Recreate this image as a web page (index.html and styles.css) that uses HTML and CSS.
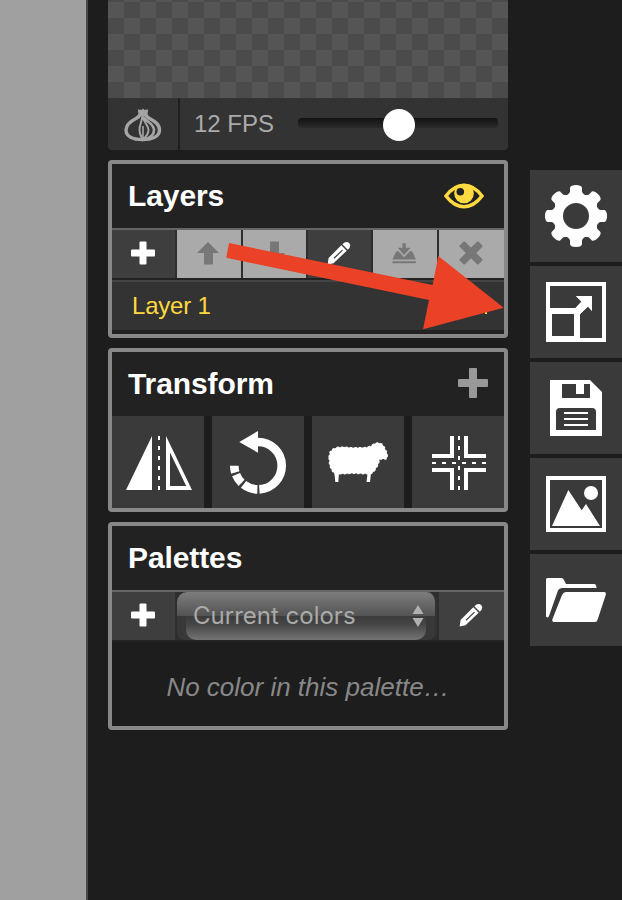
FILE: index.html
```html
<!DOCTYPE html>
<html lang="en">
<head>
<meta charset="utf-8">
<title>Sprite editor</title>
<link rel="stylesheet" href="styles.css">
</head>
<body>
<main class="app">
  <div class="canvas-area"></div>
  <div class="panels">
    <section class="preview">
      <div class="preview-frame"></div>
      <div class="preview-controls">
        <div class="onion">
          <svg width="40" height="38" viewBox="123 107 40 38" fill="none" stroke="#a5a5a5">
            <path d="M139.500 110C141 115 139.500 116.500 136 118.500C131 121 126 124 126 130C126 136.500 133 139.500 142.500 139.500S159.500 136.500 159.500 130C159.500 124 154 121 149.500 118.500C146 116.500 145 115 146.500 110" stroke-width="3.400"/>
            <path d="M138 109l3 1.500 2-2 2 2 3-1.500-2 7h-6z" fill="#a5a5a5" stroke="none"/>
            <path d="M143.300 117C146 121.500 154 123.500 154 130C154 135.500 149 138.500 143.500 139.500" stroke-width="2.600"/>
            <path d="M142.500 115C142 122 139.500 124 139.500 130C139.500 134 141.500 137 142.700 140C145 137.500 148.500 134.500 148.500 130C148.500 125 143.500 122.500 142.500 115z" stroke-width="2"/>
            <path d="M143 126v14" stroke-width="1.600"/>
          </svg>
        </div>
        <div class="fps">12 FPS</div>
        <div class="slider"><span class="knob"></span></div>
      </div>
    </section>

    <section class="box layers">
      <header class="box-head lined"><h2>Layers</h2>
        <svg width="40" height="26" viewBox="444 183.500 40 26">
          <path d="M446 196.500C452 188.500 458 185.800 464 185.800S476 188.500 482 196.500C476 204.500 470 207.200 464 207.200S452 204.500 446 196.500Z" fill="none" stroke="#ffd93f" stroke-width="3.600"/>
          <circle cx="464" cy="194" r="9.800" fill="#ffd93f"/>
          <circle cx="460.300" cy="192.300" r="3.800" fill="#222"/>
        </svg>
      </header>
      <div class="toolbar">
        <button class="tool"><svg width="24" height="24" viewBox="0 0 24 24" fill="#fff"><rect y="8.500" width="24" height="7" rx="1"/><rect x="8.500" y=".5" width="7" height="23" rx="1"/></svg></button>
        <button class="tool off"><svg width="24" height="24" viewBox="0 0 24 24" fill="#777"><path d="M12 1L23 12h-6v10.500q0 1-1 1h-7q-1 0-1-1V12H1z"/></svg></button>
        <button class="tool off"><svg width="24" height="24" viewBox="0 0 24 24" fill="#777"><path d="M12 23L23 12h-6V1.500q0-1-1-1h-7q-1 0-1 1V12H1z"/></svg></button>
        <button class="tool"><svg width="24" height="24" viewBox="0 0 24 24"><path d="M14.300 4.300l5.400 5.400L6.500 22.300.6 23.400 1.600 17z" fill="#fff"/><path d="M15.300 3.300q4-4 6.800-1.300 2.700 2.700-1.300 6.800z" fill="#fff"/><path d="M7 17.300l8.500-8.200" stroke="#3c3c3c" stroke-width="1.200"/></svg></button>
        <button class="tool off"><svg width="24" height="24" viewBox="0 0 24 24" fill="#777"><path d="M10.400 2.300h3.400V6.700H18.500L12.100 14 5.800 6.700h4.600z"/><path d="M6.300 10l5.800 6.300 6-6.300q2 0 2.900 1.800l2.900 6.700H.5l3-6.700q.8-1.800 2.800-1.800zM.5 20.200h23.400v2H.5z"/></svg></button>
        <button class="tool off"><svg width="24" height="24" viewBox="0 0 24 24" fill="#777"><g transform="rotate(45 12 12)"><rect x="-1.300" y="8.300" width="26.600" height="7.400" rx="1.200"/><rect x="8.300" y="-1.300" width="7.400" height="26.600" rx="1.200"/></g></svg></button>
      </div>
      <div class="layer-row"><span>Layer 1</span><i class="opacity-mark"></i></div>
    </section>

    <section class="box transform">
      <header class="box-head"><h2>Transform</h2>
        <svg class="more" width="30" height="30" viewBox="0 0 30 30" fill="#999"><rect y="11" width="30" height="8" rx="1"/><rect x="11" width="8" height="30" rx="1"/></svg>
      </header>
      <div class="transform-grid">
        <button class="tile"><svg width="92" height="92" viewBox="112 416 92 92" fill="#fff"><path d="M152 436V490H126zM166 436L192 490H166zM170 452.500V486H186.200z" fill-rule="evenodd"/><path d="M159 436V490" stroke="#fff" stroke-width="2" stroke-dasharray="4 6"/></svg></button>
        <button class="tile"><svg width="92" height="92" viewBox="212 416 92 92"><path d="M257.500 442A23.700 23.700 0 1 1 234.300 465.700" pathLength="270" fill="none" stroke="#fff" stroke-width="8.600" stroke-dasharray="177 5 36 6 24 5 17 9"/><path d="M258 431V452.700L239.300 442z" fill="#fff"/></svg></button>
        <button class="tile"><svg width="92" height="92" viewBox="312 416 92 92" fill="#fff"><path d="M329 457L330 452 333 449 338 447.200 344 447 353 447.800 366 447.500 371 446 374 443.800 378 442.800 382 444 384.500 447.500 387 453 387.400 457 386 459 379.800 459 378 465 374 471.500 370.500 474 358 473.500 353 473.300 346 473.700 335 474 332 470.500 329.600 465z" stroke="#fff" stroke-width="1.300" stroke-linecap="round" stroke-dasharray="1.500 3"/><path d="M334.400 473h4.600l-.7 9h-3zM367 473h4l-1 9h-3.500l1-8z"/></svg></button>
        <button class="tile"><svg width="92" height="92" viewBox="412 416 92 92" fill="none" stroke="#fff"><path d="M432 456h20v-20M486 456h-20v-20M432 470h20v20M486 470h-20v20" stroke-width="4"/><path d="M459 436v54M432 463h54" stroke-width="2" stroke-dasharray="4 6"/></svg></button>
      </div>
    </section>

    <section class="box palettes">
      <header class="box-head lined"><h2>Palettes</h2></header>
      <div class="toolbar palette-bar">
        <button class="tool"><svg width="24" height="24" viewBox="0 0 24 24" fill="#fff"><rect y="8.500" width="24" height="7" rx="1"/><rect x="8.500" y=".5" width="7" height="23" rx="1"/></svg></button>
        <div class="select"><span>Current colors</span><svg width="12" height="22" viewBox="0 0 12 22" fill="#b0b0b0"><path d="M6 0l5.500 9H.5zM6 22l5.500-9H.5z"/></svg></div>
        <button class="tool"><svg width="24" height="24" viewBox="0 0 24 24"><path d="M14.300 4.300l5.400 5.400L6.500 22.300.6 23.400 1.600 17z" fill="#fff"/><path d="M15.300 3.300q4-4 6.800-1.300 2.700 2.700-1.300 6.800z" fill="#fff"/><path d="M7 17.300l8.500-8.200" stroke="#3c3c3c" stroke-width="1.200"/></svg></button>
      </div>
      <p class="empty">No color in this palette…</p>
    </section>
  </div>

  <nav class="side">
    <button class="tile"><svg width="92" height="92" viewBox="-46 -46 92 92" fill="#fff"><circle r="18" fill="none" stroke="#fff" stroke-width="10"/>
      <g id="teeth"><path id="tooth" d="M-9-20L-6-24V-28.500Q-5-31 0-31T6-28.500V-24L9-20z"/><use href="#tooth" transform="rotate(45)"/><use href="#tooth" transform="rotate(90)"/><use href="#tooth" transform="rotate(135)"/></g><use href="#teeth" transform="rotate(180)"/></svg></button>
    <button class="tile"><svg width="92" height="92" viewBox="530 266 92 92" fill="#fff"><path d="M546 282h60v60h-60zM550 286v22h26l5.500-6.500-5.500-5.500h16v15l-4-4.500-8 7.500v24h22v-52zM552 314v22h22v-22z" fill-rule="evenodd"/><path d="M573 310.500L581.500 301.500 576 296H592V311L588 306.500 579 315z"/></svg></button>
    <button class="tile"><svg width="92" height="92" viewBox="530 362 92 92" fill="#fff"><path d="M550 380h40l12 12v44h-52zM562 384v14h28v-14h-6v10h-8v-10zM556 430h40v-18q0-4-4-4h-32q-4 0-4 4z" fill-rule="evenodd"/><path d="M564 412h24v2h-24zM564 418h24v2h-24zM564 424h24v2h-24z"/></svg></button>
    <button class="tile"><svg width="92" height="92" viewBox="530 458 92 92" fill="#fff"><rect x="548" y="478" width="56" height="52" fill="none" stroke="#fff" stroke-width="4"/><circle cx="591" cy="493" r="7"/><path d="M552 526L568.300 490 581.700 510.300 586 504 600 526z"/></svg></button>
    <button class="tile"><svg width="92" height="92" viewBox="530 554 92 92" fill="#fff"><path d="M547.500 578H561.500Q563 578 564 580L566 584H594Q596.500 584 596.500 588H562Q559 588 558 590.500L549 616Q548 618.500 546 616.500V579.500Q546 578 547.500 578z"/><path d="M566 592H604.500Q606.500 592.500 605.700 595L597.500 620Q597 622 595 622H554Q551.500 621.500 552.500 619L562 595Q563.500 592 566 592z"/></svg></button>
  </nav>

  <svg class="pointer" width="280" height="90" viewBox="225 241 280 90"><path d="M229 243L432.600 285 438.300 256 503.700 307.700 423 329.300 429 300 226.300 257.700z" fill="#eb4127"/></svg>
</main>
</body>
</html>
```
FILE: styles.css
```css
* { box-sizing: border-box; }

body {
  margin: 0;
  background: #1d1d1d;
  font-family: "Liberation Sans", Arial, sans-serif;
  color: #fff;
}

button {
  margin: 0;
  padding: 0;
  border: 0;
  font: inherit;
}

svg { display: block; flex: none; }

.app {
  position: relative;
  display: flex;
  width: 622px;
  height: 900px;
  overflow: hidden;
}

.canvas-area {
  width: 88px;
  background: #a0a0a0;
  border-right: 2px solid #484848;
}

.panels {
  width: 400px;
  margin-left: 20px;
}

.preview {
  height: 150px;
  margin-bottom: 10px;
}

.preview-frame {
  height: 98px;
  background: repeating-conic-gradient(#4b4b4b 0 25%, #555 0 50%) 0 2px / 32px 32px;
}

.preview-controls {
  display: flex;
  height: 52px;
  background: #333;
  border-radius: 0 0 4px 4px;
}

.onion {
  display: flex;
  width: 72px;
  padding: 9px 0 0 15px;
  border-right: 2px solid #1f1f1f;
}

.fps {
  width: 118px;
  padding-left: 14px;
  font-size: 24px;
  line-height: 51px;
  color: #aaa;
}

.slider {
  position: relative;
  width: 200px;
  height: 10px;
  margin-top: 20px;
  border-radius: 4px;
  background: linear-gradient(#111, #2b2b2b);
}

.knob {
  position: absolute;
  left: 85px;
  top: -9px;
  width: 32px;
  height: 32px;
  border-radius: 50%;
  background: #fff;
}

.box {
  border: 4px solid #888;
  border-radius: 4px;
  background: #222;
  overflow: hidden;
}

.box-head {
  display: flex;
  align-items: center;
  justify-content: space-between;
  height: 64px;
  padding: 0 20px 0 16px;
}

.box-head.lined {
  height: 66px;
  border-bottom: 2px solid #666;
}

.box-head h2 {
  margin: 0;
  font-size: 30px;
  line-height: 64px;
  letter-spacing: -0.1px;
}

.box-head .more { margin: -2px -4px 0 0; }

.layers { height: 178px; margin-bottom: 10px; }
.transform { height: 164px; margin-bottom: 10px; background: #1d1d1d; }
.transform .box-head { background: #222; }
.palettes { height: 208px; background: #1d1d1d; }
.palettes .box-head { background: #222; }

.toolbar {
  display: grid;
  grid-template-columns: 63px 64px 63px 63px 64px 65px;
  gap: 2px;
  height: 50px;
  border-bottom: 2px solid #222;
  background: #2e2e2e;
}

.tool {
  display: flex;
  align-items: center;
  justify-content: center;
  background: #3e3e3e;
  padding: 0 2px 3px 0;
}

.tool.off { background: #aaa; }

.layer-row {
  display: flex;
  align-items: center;
  justify-content: space-between;
  height: 50px;
  padding: 0 17px 0 20px;
  border-top: 2px solid #444;
  background: #333;
  color: #ffd93f;
  font-size: 24px;
  letter-spacing: -0.2px;
}

.opacity-mark {
  width: 2px;
  height: 2px;
  margin-top: 13px;
  background: #ffd93f;
}

.transform-grid {
  display: grid;
  grid-template-columns: repeat(4, 92px);
  gap: 8px;
}

.tile {
  display: block;
  width: 92px;
  height: 92px;
  background: #3a3a3a;
}

.palette-bar {
  grid-template-columns: 63px 260px 65px;
}

.select {
  position: relative;
  z-index: 0;
  display: flex;
  align-items: center;
  justify-content: space-between;
  padding: 0 11px 0 16px;
  border-right: 2px solid #333;
  border-radius: 10px 10px 8px 8px;
  background: linear-gradient(#7d7d7d, #535353) 0 0 / 100% 24px no-repeat, #383838;
  color: #aaa;
  font: 24px/46px Inter, sans-serif;
}

.select::before {
  content: "";
  position: absolute;
  z-index: -1;
  left: 9px;
  right: 9px;
  bottom: 0;
  height: 24px;
  border-radius: 0 0 10px 10px;
  background: linear-gradient(#3c3c3c, #454545 35%, #747474);
}

.palette-bar .tool:last-child { background: #404040; }

.empty {
  margin: 0;
  text-align: center;
  font-size: 26px;
  font-style: italic;
  line-height: 90px;
  color: #888;
}

.side {
  display: grid;
  grid-auto-rows: 92px;
  align-content: start;
  gap: 4px;
  margin: 170px 0 0 22px;
}

.pointer {
  position: absolute;
  left: 225px;
  top: 241px;
}
```
